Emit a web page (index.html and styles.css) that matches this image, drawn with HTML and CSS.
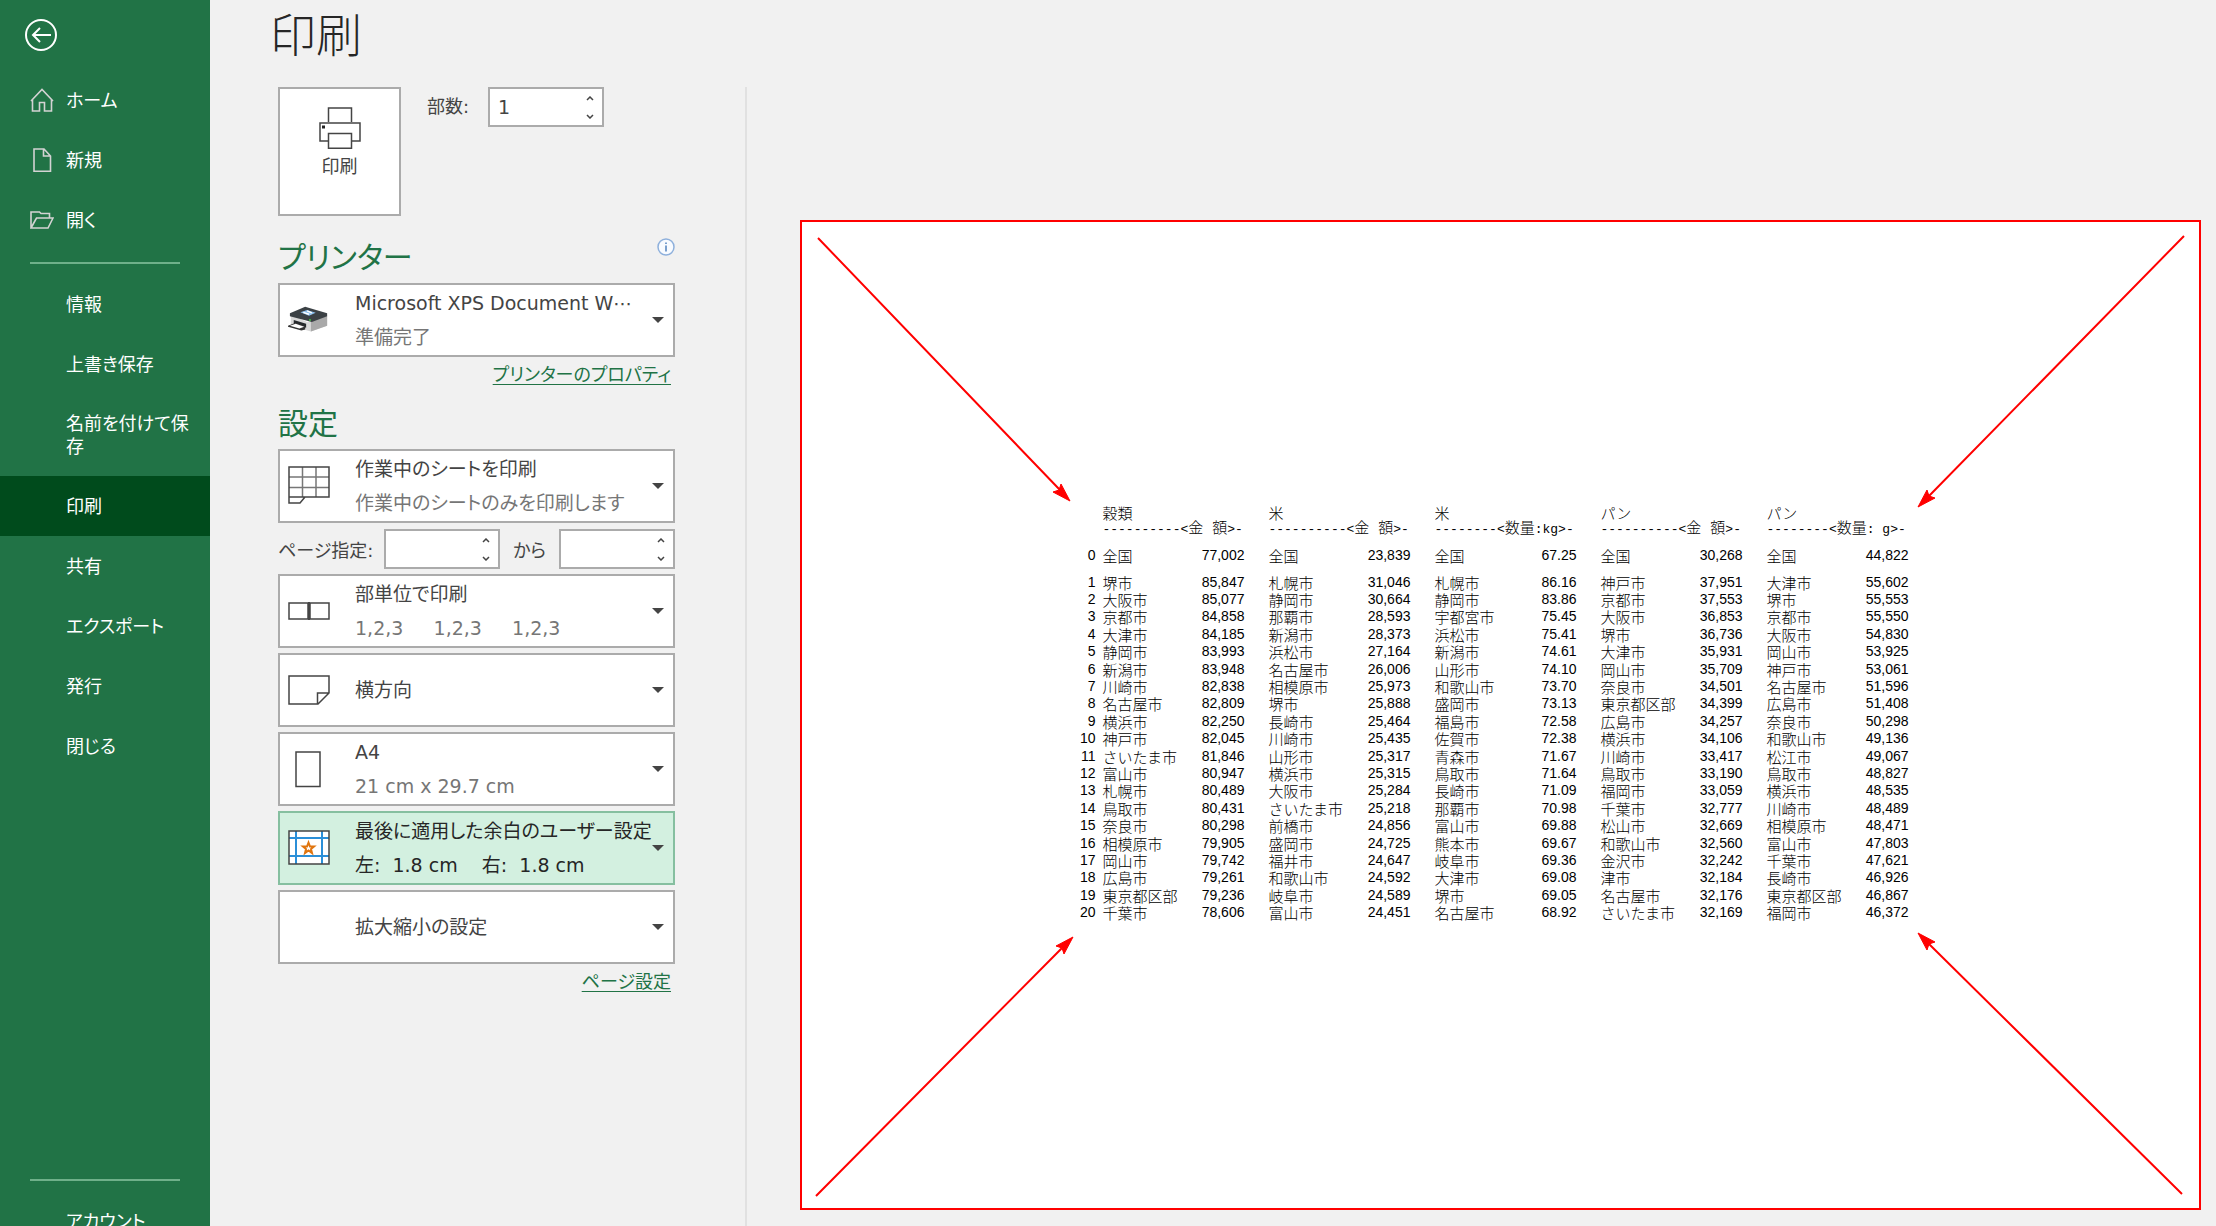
FILE: index.html
```html
<!DOCTYPE html>
<html lang="ja">
<head>
    <meta charset="UTF-8">
    <meta name="viewport" content="width=device-width, initial-scale=1.0">
    <title>印刷</title>
    <link rel="stylesheet" href="styles.css">
</head>
<body>
    <nav class="sidebar">
        <button class="back" aria-label="戻る">
            <svg width="34" height="34" viewBox="0 0 34 34" fill="none" stroke="#fff" stroke-width="2">
                <circle cx="17" cy="17" r="15"/>
                <path d="M27 17H9M16 10l-7 7 7 7"/>
            </svg>
        </button>
        <a class="nav-item" href="#">
            <svg class="nav-icon" width="24" height="24" viewBox="0 0 24 24" fill="none" stroke="#d3d3d3" stroke-width="1.6">
                <path d="M1 13L12 1.5 23 13M2.500 11.500V23H9.500V14.500H14.500V23H21.500V11.500"/>
            </svg>
            <span>ホーム</span>
        </a>
        <a class="nav-item" href="#">
            <svg class="nav-icon" width="24" height="24" viewBox="0 0 24 24" fill="none" stroke="#d3d3d3" stroke-width="1.6">
                <path d="M4 1H14L20.500 8V23.200H4ZM13.500 1V8H20.500"/>
            </svg>
            <span>新規</span>
        </a>
        <a class="nav-item" href="#">
            <svg class="nav-icon" width="24" height="24" viewBox="0 0 24 24" fill="none" stroke="#d3d3d3" stroke-width="1.6">
                <path d="M1 20V4H9.500L11 5.500H19.500V10M1 20L6.500 10H23L18 20Z"/>
            </svg>
            <span>開く</span>
        </a>
        <hr>
        <a class="nav-item" href="#"><span>情報</span></a>
        <a class="nav-item" href="#"><span>上書き保存</span></a>
        <a class="nav-item" href="#"><span>名前を付けて保存</span></a>
        <a class="nav-item active" href="#"><span>印刷</span></a>
        <a class="nav-item" href="#"><span>共有</span></a>
        <a class="nav-item" href="#"><span>エクスポート</span></a>
        <a class="nav-item" href="#"><span>発行</span></a>
        <a class="nav-item" href="#"><span>閉じる</span></a>
        <div class="nav-bottom">
            <hr>
            <a class="nav-item" href="#"><span>アカウント</span></a>
        </div>
    </nav>

    <main>
        <h1>印刷</h1>
        <div class="content">
            <section class="settings">
                <div class="top-row">
                    <button class="print-button">
                        <svg width="42" height="42" viewBox="0 0 42 42" fill="#fff" stroke="#444" stroke-width="1.500">
                            <path d="M9.500 15V1H32.500V15"/>
                            <path d="M1 16H41V34H1Z"/>
                            <path d="M9.500 26.500H32.500V41.200H9.500Z"/>
                            <path d="M3 18.500H6V21.500H3Z" fill="#222" stroke="none"/>
                        </svg>
                        印刷
                    </button>
                    <label class="copies" for="copies">部数:</label>
                    <div class="spinner">
                        <input type="number" id="copies" value="1">
                        <div class="arrows">
                            <button aria-label="増やす"><svg width="8" height="5" viewBox="0 0 8 5"><path d="M1 4l3-3 3 3"/></svg></button>
                            <button aria-label="減らす"><svg width="8" height="5" viewBox="0 0 8 5"><path d="M1 1l3 3 3-3"/></svg></button>
                        </div>
                    </div>
                </div>

                <div class="heading">
                    <h2>プリンター</h2>
                    <svg class="info" width="18" height="18" viewBox="0 0 18 18" fill="#f8fbff" stroke="#8eb0dc" stroke-width="1.500">
                        <circle cx="9" cy="9" r="8"/>
                        <path d="M9 7.500V13.500M9 4.500V6" stroke="#4f81bd"/>
                    </svg>
                </div>
                <div class="option">
                    <svg width="42" height="42" viewBox="0 0 44 42">
                        <path d="M3 15L20 23 41 17V27L24 33 3 27Z" fill="#d9d9d9"/>
                        <path d="M24 22L41 16.500V27L24 33Z" fill="#a9a9a9"/>
                        <path d="M2 14L18 7 41 14V17L25 23 2 17Z" fill="#3b4145"/>
                        <path d="M13 13L20 10.500 29 13.500 22 16.500Z" fill="#8fc1ee"/>
                        <path d="M16 13l6 2M20 11.500l5 2" stroke="#fff" stroke-width="1.500"/>
                        <path d="M6 21L19 25V29L6 25Z" fill="#25292c"/>
                        <path d="M0 27L8 24 18 27.500V31L14 32 0 28Z" fill="#333"/>
                        <path d="M2 27L8 25 17 28 12 30Z" fill="#fff"/>
                        <circle cx="23" cy="21" r="1" fill="#43d443"/>
                    </svg>
                    <div class="option-text">
                        <select aria-label="プリンター"><option>Microsoft XPS Document W⋯</option></select>
                        <p>準備完了</p>
                    </div>
                    <svg class="caret" width="12" height="6" viewBox="0 0 12 6"><path d="M0 0H12L6 6Z"/></svg>
                </div>
                <a class="link" href="#">プリンターのプロパティ</a>

                <div class="heading">
                    <h2>設定</h2>
                </div>
                <div class="options">
                    <div class="option">
                        <svg width="42" height="42" viewBox="0 0 42 42" fill="none" stroke="#444" stroke-width="1.500">
                            <path d="M1 12H41M1 22.500H41M14.500 2V32M28 2V32" stroke="#777"/>
                            <path d="M1 2H41V32H1ZM1 32V38H12L17 32"/>
                        </svg>
                        <div class="option-text">
                            <select aria-label="印刷対象"><option>作業中のシートを印刷</option></select>
                            <p>作業中のシートのみを印刷します</p>
                        </div>
                        <svg class="caret" width="12" height="6" viewBox="0 0 12 6"><path d="M0 0H12L6 6Z"/></svg>
                    </div>

                    <div class="range">
                        <label for="from">ページ指定:</label>
                        <div class="spinner">
                            <input type="number" id="from">
                            <div class="arrows">
                                <button aria-label="増やす"><svg width="8" height="5" viewBox="0 0 8 5"><path d="M1 4l3-3 3 3"/></svg></button>
                                <button aria-label="減らす"><svg width="8" height="5" viewBox="0 0 8 5"><path d="M1 1l3 3 3-3"/></svg></button>
                            </div>
                        </div>
                        <label class="to-label" for="to">から</label>
                        <div class="spinner">
                            <input type="number" id="to">
                            <div class="arrows">
                                <button aria-label="増やす"><svg width="8" height="5" viewBox="0 0 8 5"><path d="M1 4l3-3 3 3"/></svg></button>
                                <button aria-label="減らす"><svg width="8" height="5" viewBox="0 0 8 5"><path d="M1 1l3 3 3-3"/></svg></button>
                            </div>
                        </div>
                    </div>

                    <div class="option">
                        <svg width="42" height="42" viewBox="0 0 42 42" fill="none" stroke="#444" stroke-width="1.500">
                            <path d="M1 13H20V29H1ZM22 13H41V29H22Z"/>
                            <path d="M21 12V30" stroke-width="2"/>
                        </svg>
                        <div class="option-text">
                            <select aria-label="印刷単位"><option>部単位で印刷</option></select>
                            <p>1,2,3&nbsp;&nbsp;&nbsp;&nbsp;&nbsp;1,2,3&nbsp;&nbsp;&nbsp;&nbsp;&nbsp;1,2,3</p>
                        </div>
                        <svg class="caret" width="12" height="6" viewBox="0 0 12 6"><path d="M0 0H12L6 6Z"/></svg>
                    </div>

                    <div class="option">
                        <svg width="42" height="42" viewBox="0 0 42 42" fill="none" stroke="#444" stroke-width="1.500">
                            <path d="M1 7H41V24L30 35H1ZM29.500 35V24H41"/>
                        </svg>
                        <div class="option-text">
                            <select aria-label="用紙の向き"><option>横方向</option></select>
                        </div>
                        <svg class="caret" width="12" height="6" viewBox="0 0 12 6"><path d="M0 0H12L6 6Z"/></svg>
                    </div>

                    <div class="option">
                        <svg width="42" height="42" viewBox="0 0 42 42" fill="none" stroke="#444" stroke-width="1.500">
                            <path d="M8 4H32V38.500H8Z"/>
                        </svg>
                        <div class="option-text">
                            <select aria-label="用紙サイズ"><option>A4</option></select>
                            <p>21 cm x 29.7 cm</p>
                        </div>
                        <svg class="caret" width="12" height="6" viewBox="0 0 12 6"><path d="M0 0H12L6 6Z"/></svg>
                    </div>

                    <div class="option selected">
                        <svg width="42" height="42" viewBox="0 0 42 42" fill="none" stroke-width="2">
                            <path d="M1 4H41V37H1Z" fill="#fff"/>
                            <path d="M8 4V37M34 4V37M1 11H41M1 29H41" stroke="#2b8fd8"/>
                            <path d="M1 4H41V37H1Z" stroke="#444" stroke-width="1.500"/>
                            <path d="M20.500 15.500L22 19.500H26L23 22 24 26 20.500 23.500 17 26 18 22 15 19.500H19Z" stroke="#e0750f"/>
                        </svg>
                        <div class="option-text">
                            <select aria-label="余白"><option>最後に適用した余白のユーザー設定</option></select>
                            <p>左:&nbsp; 1.8 cm&nbsp;&nbsp;&nbsp; 右:&nbsp; 1.8 cm</p>
                        </div>
                        <svg class="caret" width="12" height="6" viewBox="0 0 12 6"><path d="M0 0H12L6 6Z"/></svg>
                    </div>

                    <div class="option">
                        <svg width="42" height="42" viewBox="0 0 42 42"></svg>
                        <div class="option-text">
                            <select aria-label="拡大縮小"><option>拡大縮小の設定</option></select>
                        </div>
                        <svg class="caret" width="12" height="6" viewBox="0 0 12 6"><path d="M0 0H12L6 6Z"/></svg>
                    </div>
                </div>
                <a class="link" href="#">ページ設定</a>
            </section>

            <section class="preview">
                <div class="page">
                    <svg class="page-arrows" viewBox="0 0 1397 986" preserveAspectRatio="none" fill="#f00" stroke="#f00" stroke-width="2">
                        <path d="M16 16L258 268M1382 14L1126 275M14 974L260 726M1380 972L1126 721"/>
                        <path d="M268 279L251 270 257 268 259 262ZM1116 285L1125 268 1127 274 1133 276ZM271 715L262 732 260 726 254 724ZM1116 711L1133 720 1127 722 1125 728Z" stroke-width="1"/>
                    </svg>
                    <table>
                        <colgroup>
                            <col class="no">
                            <col class="city"><col class="value">
                            <col class="city"><col class="value">
                            <col class="city"><col class="value">
                            <col class="city"><col class="value">
                            <col class="city"><col class="value">
                        </colgroup>
                        <thead>
                            <tr><th></th><th colspan="2">穀類</th><th colspan="2">米</th><th colspan="2">米</th><th colspan="2">パン</th><th colspan="2">パン</th></tr>
                            <tr class="units"><th></th><th colspan="2">----------&lt;<span>金 額</span>&gt;-</th><th colspan="2">----------&lt;<span>金 額</span>&gt;-</th><th colspan="2">--------&lt;<span>数量</span>:kg&gt;-</th><th colspan="2">----------&lt;<span>金 額</span>&gt;-</th><th colspan="2">--------&lt;<span>数量</span>: g&gt;-</th></tr>
                        </thead>
                        <tbody>
                            <tr class="total"><td>0</td><td>全国</td><td>77,002</td><td>全国</td><td>23,839</td><td>全国</td><td>67.25</td><td>全国</td><td>30,268</td><td>全国</td><td>44,822</td></tr>
                            <tr><td>1</td><td>堺市</td><td>85,847</td><td>札幌市</td><td>31,046</td><td>札幌市</td><td>86.16</td><td>神戸市</td><td>37,951</td><td>大津市</td><td>55,602</td></tr>
                            <tr><td>2</td><td>大阪市</td><td>85,077</td><td>静岡市</td><td>30,664</td><td>静岡市</td><td>83.86</td><td>京都市</td><td>37,553</td><td>堺市</td><td>55,553</td></tr>
                            <tr><td>3</td><td>京都市</td><td>84,858</td><td>那覇市</td><td>28,593</td><td>宇都宮市</td><td>75.45</td><td>大阪市</td><td>36,853</td><td>京都市</td><td>55,550</td></tr>
                            <tr><td>4</td><td>大津市</td><td>84,185</td><td>新潟市</td><td>28,373</td><td>浜松市</td><td>75.41</td><td>堺市</td><td>36,736</td><td>大阪市</td><td>54,830</td></tr>
                            <tr><td>5</td><td>静岡市</td><td>83,993</td><td>浜松市</td><td>27,164</td><td>新潟市</td><td>74.61</td><td>大津市</td><td>35,931</td><td>岡山市</td><td>53,925</td></tr>
                            <tr><td>6</td><td>新潟市</td><td>83,948</td><td>名古屋市</td><td>26,006</td><td>山形市</td><td>74.10</td><td>岡山市</td><td>35,709</td><td>神戸市</td><td>53,061</td></tr>
                            <tr><td>7</td><td>川崎市</td><td>82,838</td><td>相模原市</td><td>25,973</td><td>和歌山市</td><td>73.70</td><td>奈良市</td><td>34,501</td><td>名古屋市</td><td>51,596</td></tr>
                            <tr><td>8</td><td>名古屋市</td><td>82,809</td><td>堺市</td><td>25,888</td><td>盛岡市</td><td>73.13</td><td>東京都区部</td><td>34,399</td><td>広島市</td><td>51,408</td></tr>
                            <tr><td>9</td><td>横浜市</td><td>82,250</td><td>長崎市</td><td>25,464</td><td>福島市</td><td>72.58</td><td>広島市</td><td>34,257</td><td>奈良市</td><td>50,298</td></tr>
                            <tr><td>10</td><td>神戸市</td><td>82,045</td><td>川崎市</td><td>25,435</td><td>佐賀市</td><td>72.38</td><td>横浜市</td><td>34,106</td><td>和歌山市</td><td>49,136</td></tr>
                            <tr><td>11</td><td>さいたま市</td><td>81,846</td><td>山形市</td><td>25,317</td><td>青森市</td><td>71.67</td><td>川崎市</td><td>33,417</td><td>松江市</td><td>49,067</td></tr>
                            <tr><td>12</td><td>富山市</td><td>80,947</td><td>横浜市</td><td>25,315</td><td>鳥取市</td><td>71.64</td><td>鳥取市</td><td>33,190</td><td>鳥取市</td><td>48,827</td></tr>
                            <tr><td>13</td><td>札幌市</td><td>80,489</td><td>大阪市</td><td>25,284</td><td>長崎市</td><td>71.09</td><td>福岡市</td><td>33,059</td><td>横浜市</td><td>48,535</td></tr>
                            <tr><td>14</td><td>鳥取市</td><td>80,431</td><td>さいたま市</td><td>25,218</td><td>那覇市</td><td>70.98</td><td>千葉市</td><td>32,777</td><td>川崎市</td><td>48,489</td></tr>
                            <tr><td>15</td><td>奈良市</td><td>80,298</td><td>前橋市</td><td>24,856</td><td>富山市</td><td>69.88</td><td>松山市</td><td>32,669</td><td>相模原市</td><td>48,471</td></tr>
                            <tr><td>16</td><td>相模原市</td><td>79,905</td><td>盛岡市</td><td>24,725</td><td>熊本市</td><td>69.67</td><td>和歌山市</td><td>32,560</td><td>富山市</td><td>47,803</td></tr>
                            <tr><td>17</td><td>岡山市</td><td>79,742</td><td>福井市</td><td>24,647</td><td>岐阜市</td><td>69.36</td><td>金沢市</td><td>32,242</td><td>千葉市</td><td>47,621</td></tr>
                            <tr><td>18</td><td>広島市</td><td>79,261</td><td>和歌山市</td><td>24,592</td><td>大津市</td><td>69.08</td><td>津市</td><td>32,184</td><td>長崎市</td><td>46,926</td></tr>
                            <tr><td>19</td><td>東京都区部</td><td>79,236</td><td>岐阜市</td><td>24,589</td><td>堺市</td><td>69.05</td><td>名古屋市</td><td>32,176</td><td>東京都区部</td><td>46,867</td></tr>
                            <tr><td>20</td><td>千葉市</td><td>78,606</td><td>富山市</td><td>24,451</td><td>名古屋市</td><td>68.92</td><td>さいたま市</td><td>32,169</td><td>福岡市</td><td>46,372</td></tr>
                        </tbody>
                    </table>
                </div>
            </section>
        </div>
    </main>
</body>
</html>
```
FILE: styles.css
```css
* {
    box-sizing: border-box;
}
body {
    margin: 0;
    height: 100vh;
    overflow: hidden;
    display: flex;
    background: #f1f1f1;
    color: #444;
    font-family: "DejaVu Sans", "Noto Sans CJK JP", sans-serif;
    font-size: 18px;
    font-feature-settings: "palt";
}
h1, h2, p {
    margin: 0;
    font-weight: 400;
}
button, input, select {
    font: inherit;
    font-feature-settings: inherit;
    color: inherit;
    border: 0;
    padding: 0;
    background: none;
}
svg {
    display: block;
    flex-shrink: 0;
}

/* sidebar */
.sidebar {
    width: 210px;
    flex-shrink: 0;
    display: flex;
    flex-direction: column;
    background: #217346;
    color: #fff;
}
.back {
    align-self: flex-start;
    margin: 18px 24px;
}
.nav-item {
    min-height: 60px;
    flex-shrink: 0;
    display: flex;
    align-items: center;
    padding: 18px 18px 18px 66px;
    color: #fff;
    line-height: 23px;
    text-decoration: none;
}
.nav-icon {
    margin: 0 12px 0 -36px;
}
.nav-item.active {
    background: #004b1c;
}
.sidebar hr {
    width: 150px;
    height: 2px;
    margin: 12px 30px 10px;
    border: 0;
    background: #6fb08a;
}
.nav-bottom {
    margin-top: auto;
    margin-bottom: -25px;
}

/* main */
main {
    flex: 1;
    min-width: 0;
    display: flex;
    flex-direction: column;
    padding-left: 60px;
}
h1 {
    height: 87px;
    flex-shrink: 0;
    color: #262626;
    font-size: 46px;
    font-weight: 300;
    line-height: 72px;
}
.content {
    flex: 1;
    min-height: 0;
    display: flex;
    padding-left: 8px;
}
.settings {
    width: 397px;
    flex-shrink: 0;
    display: flex;
    flex-direction: column;
}
.top-row {
    display: flex;
    align-items: flex-start;
    margin-bottom: 6px;
}
.print-button {
    width: 123px;
    height: 129px;
    display: flex;
    flex-direction: column;
    align-items: center;
    gap: 3px;
    padding-top: 18px;
    border: 2px solid #ababab;
    background: #fff;
}
.copies {
    width: 87px;
    padding-left: 26px;
    line-height: 40px;
}
.spinner {
    width: 116px;
    height: 40px;
    display: flex;
    border: 2px solid #ababab;
    background: #fff;
}
.spinner input {
    flex: 1;
    min-width: 0;
    padding-left: 8px;
    outline: 0;
    font-size: 19px;
    appearance: textfield;
}
.spinner input::-webkit-inner-spin-button {
    display: none;
}
.arrows {
    width: 24px;
    display: flex;
    flex-direction: column;
}
.arrows button {
    flex: 1;
    display: flex;
    align-items: center;
    justify-content: center;
}
.arrows path {
    fill: none;
    stroke: #444;
    stroke-width: 1.5;
}
.heading {
    display: flex;
    justify-content: space-between;
    align-items: flex-start;
    height: 61px;
    padding-top: 16px;
}
h2 {
    color: #217346;
    font-size: 30px;
    line-height: 40px;
}
.options {
    display: flex;
    flex-direction: column;
    gap: 5px;
}
.option {
    height: 74px;
    display: flex;
    align-items: center;
    padding: 0 9px 0 8px;
    border: 2px solid #ababab;
    background: #fff;
    font-size: 19px;
}
.option-text {
    flex: 1;
    min-width: 0;
    padding-left: 25px;
    line-height: 34px;
}
.option select {
    display: block;
    width: 100%;
    height: 34px;
    appearance: none;
    outline: 0;
}
.option p {
    color: #767676;
    white-space: nowrap;
}
.option.selected {
    border-color: #86bfa0;
    background: #d3f0e0;
}
.option.selected, .option.selected p {
    color: #262626;
}
.caret {
    fill: #444;
}
.range {
    display: grid;
    grid-template-columns: 106px 116px 1fr 116px;
    align-items: center;
    padding-top: 1px;
}
.to-label {
    text-align: center;
}
.link {
    align-self: flex-end;
    margin: 5px 4px 0 0;
    color: #217346;
    line-height: 26px;
    text-underline-offset: 3px;
}

/* preview */
.preview {
    flex: 1;
    min-width: 0;
    margin-left: 70px;
    padding: 133px 15px 16px 53px;
    border-left: 2px solid #e1e1e1;
}
.page {
    position: relative;
    height: 100%;
    display: flex;
    align-items: center;
    justify-content: center;
    padding-bottom: 5px;
    border: 2px solid #f00;
    background: #fff;
}
.page-arrows {
    position: absolute;
    inset: 0;
    width: 100%;
    height: 100%;
}
table {
    width: 864px;
    height: 418px;
    border-collapse: collapse;
    table-layout: fixed;
    color: #000;
    font-family: "Noto Sans CJK JP", sans-serif;
    font-size: 15px;
    font-feature-settings: normal;
    line-height: 17px;
    white-space: nowrap;
}
.no {
    width: 34px;
}
.city {
    width: 82px;
}
.value {
    width: 84px;
}
th, td {
    padding: 0;
    font-weight: 300;
    text-align: left;
}
td:nth-child(odd) {
    padding-right: 24px;
    font-family: "Liberation Sans", sans-serif;
    font-size: 14px;
    text-align: right;
}
td:first-child {
    padding-right: 7px;
}
.units th {
    font-family: "Liberation Mono", "Noto Sans CJK JP", monospace;
    font-size: 13px;
}
.units span {
    font-size: 15px;
}
.total td {
    height: 36px;
}
```
